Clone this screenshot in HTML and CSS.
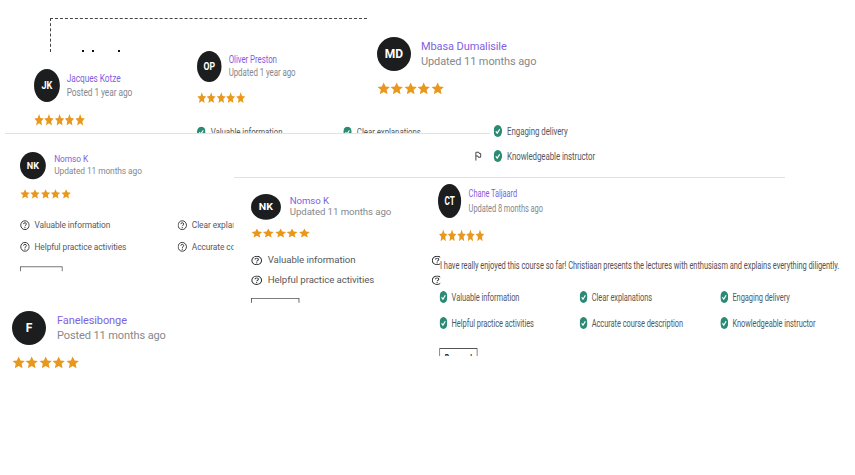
FILE: index.html
```html
<!DOCTYPE html>
<html lang="en">
<head>
<meta charset="utf-8">
<title>Course reviews</title>
<link rel="stylesheet" href="styles.css">
</head>
<body>
<svg class="defs" width="0" height="0" aria-hidden="true">
  <defs>
    <symbol id="star" viewBox="0 0 24 24"><path fill="#e8981c" d="M12 .8l3.4 7.4 8 .9-6 5.4 1.7 8L12 18.5l-7.1 4 1.7-8-6-5.4 8-.9z"/></symbol>
    <symbol id="ok" viewBox="0 0 24 24"><circle cx="12" cy="12" r="12" fill="#2a8a74"/><path fill="none" stroke="#fff" stroke-width="3" d="M6.5 12.5l4 4 7-8"/></symbol>
    <symbol id="help" viewBox="0 0 24 24"><circle cx="12" cy="12" r="10.2" fill="none" stroke="#2d2f31" stroke-width="2.2"/><path fill="none" stroke="#2d2f31" stroke-width="2.2" d="M8.6 9.5c0-4.4 6.9-4.4 6.9 0 0 2.7-3.5 2.4-3.5 5"/><circle cx="12" cy="17.6" r="1.4" fill="#2d2f31"/></symbol>
    <symbol id="flag" viewBox="0 0 24 24"><path fill="none" stroke="#2d2f31" stroke-width="2.4" d="M5 23V3h10l1 3h5v9h-8l-1-3H5"/></symbol>
  </defs>
</svg>

<main class="canvas">
  <div class="frame"></div>
  <div class="specks"><i></i><i></i><i></i></div>
  <hr class="rule rule-a">
  <hr class="rule rule-b">

  <section class="shot shot-jk">
    <header class="head"><div class="avatar">JK</div><div><a class="name">Jacques Kotze</a><p class="when">Posted 1 year ago</p></div></header>
    <div class="stars"><svg><use href="#star"/></svg><svg><use href="#star"/></svg><svg><use href="#star"/></svg><svg><use href="#star"/></svg><svg><use href="#star"/></svg></div>
  </section>

  <section class="shot shot-op">
    <header class="head"><div class="avatar">OP</div><div><a class="name">Oliver Preston</a><p class="when">Updated 1 year ago</p></div></header>
    <div class="stars"><svg><use href="#star"/></svg><svg><use href="#star"/></svg><svg><use href="#star"/></svg><svg><use href="#star"/></svg><svg><use href="#star"/></svg></div>
    <ul class="crit">
      <li><svg><use href="#ok"/></svg>Valuable information</li>
      <li><svg><use href="#ok"/></svg>Clear explanations</li>
    </ul>
  </section>

  <section class="shot shot-md">
    <header class="head"><div class="avatar">MD</div><div><a class="name">Mbasa Dumalisile</a><p class="when">Updated 11 months ago</p></div></header>
    <div class="stars"><svg><use href="#star"/></svg><svg><use href="#star"/></svg><svg><use href="#star"/></svg><svg><use href="#star"/></svg><svg><use href="#star"/></svg></div>
  </section>

  <section class="shot shot-frag">
    <span></span>
    <p class="item"><svg><use href="#ok"/></svg>Engaging delivery</p>
    <svg class="flag"><use href="#flag"/></svg>
    <p class="item"><svg><use href="#ok"/></svg>Knowledgeable instructor</p>
  </section>

  <section class="shot shot-nk1">
    <header class="head"><div class="avatar">NK</div><div><a class="name">Nomso K</a><p class="when">Updated 11 months ago</p></div></header>
    <div class="stars"><svg><use href="#star"/></svg><svg><use href="#star"/></svg><svg><use href="#star"/></svg><svg><use href="#star"/></svg><svg><use href="#star"/></svg></div>
    <ul class="crit">
      <li><svg><use href="#help"/></svg>Valuable information</li>
      <li><svg><use href="#help"/></svg>Clear explanations</li>
      <li><svg><use href="#help"/></svg>Helpful practice activities</li>
      <li><svg><use href="#help"/></svg>Accurate course description</li>
    </ul>
    <button class="btn" type="button">Personal</button>
  </section>

  <section class="shot shot-nk2">
    <header class="head"><div class="avatar">NK</div><div><a class="name">Nomso K</a><p class="when">Updated 11 months ago</p></div></header>
    <div class="stars"><svg><use href="#star"/></svg><svg><use href="#star"/></svg><svg><use href="#star"/></svg><svg><use href="#star"/></svg><svg><use href="#star"/></svg></div>
    <ul class="crit">
      <li><svg><use href="#help"/></svg>Valuable information</li>
      <li><svg><use href="#help"/></svg>Clear explanations</li>
      <li><svg><use href="#help"/></svg>Helpful practice activities</li>
      <li><svg><use href="#help"/></svg>Accurate course description</li>
    </ul>
    <button class="btn" type="button">Personal</button>
  </section>

  <section class="shot shot-ct">
    <header class="head"><div class="avatar">CT</div><div><a class="name">Chane Taljaard</a><p class="when">Updated 8 months ago</p></div></header>
    <div class="stars"><svg><use href="#star"/></svg><svg><use href="#star"/></svg><svg><use href="#star"/></svg><svg><use href="#star"/></svg><svg><use href="#star"/></svg></div>
    <p class="comment">I have really enjoyed this course so far! Christiaan presents the lectures with enthusiasm and explains everything diligently.</p>
    <ul class="crit">
      <li><svg><use href="#ok"/></svg>Valuable information</li>
      <li><svg><use href="#ok"/></svg>Clear explanations</li>
      <li><svg><use href="#ok"/></svg>Engaging delivery</li>
      <li><svg><use href="#ok"/></svg>Helpful practice activities</li>
      <li><svg><use href="#ok"/></svg>Accurate course description</li>
      <li><svg><use href="#ok"/></svg>Knowledgeable instructor</li>
    </ul>
    <button class="btn" type="button">Personal</button>
  </section>

  <section class="shot shot-f">
    <header class="head"><div class="avatar">F</div><div><a class="name">Fanelesibonge</a><p class="when">Posted 11 months ago</p></div></header>
    <div class="stars"><svg><use href="#star"/></svg><svg><use href="#star"/></svg><svg><use href="#star"/></svg><svg><use href="#star"/></svg><svg><use href="#star"/></svg></div>
  </section>
</main>
</body>
</html>
```

FILE: styles.css
```css
* { box-sizing: border-box; }
html, body { margin: 0; padding: 0; background: #fff; overflow: hidden; }
.defs { position: absolute; }
.canvas {
  position: relative;
  width: 855px;
  height: 475px;
  font-family: Roboto, "Noto Sans", sans-serif;
  letter-spacing: -.1px;
  overflow: hidden;
}

/* collage furniture */
.frame {
  position: absolute;
  left: 50px;
  top: 18px;
  width: 317px;
  height: 34px;
  border-top: 1px dashed #444;
  border-left: 1px dashed #444;
}
.specks { position: absolute; left: 82px; top: 50px; display: flex; gap: 8px; }
.specks i { width: 2px; height: 2px; background: #111; }
.specks i:last-child { margin-left: 16px; }
.rule { position: absolute; margin: 0; border: 0; height: 1px; background: #e0e2e4; z-index: 5; }
.rule-a { left: 5px; top: 133px; width: 485px; }
.rule-b { left: 234px; top: 177px; width: 551px; }

/* one pasted, resized review */
.shot {
  position: absolute;
  background: #fff;
  overflow: hidden;
  transform-origin: 0 0;
}
.head { display: flex; align-items: center; gap: 11px; height: 34px; padding-bottom: 1px; }
.avatar {
  flex: none;
  width: 34px;
  height: 34px;
  border-radius: 50%;
  background: #1c1d1f;
  color: #fff;
  font-size: 12px;
  font-weight: 700;
  letter-spacing: 0;
  display: flex;
  align-items: center;
  justify-content: center;
}
.name { display: block; font-size: 11px; line-height: 15px; color: #7f5fe0; white-space: nowrap; }
.when { margin: 0; font-size: 11px; line-height: 15px; color: #85888c; white-space: nowrap; }
.stars { display: flex; margin-top: 11px; height: 13px; }
.stars svg { width: 13.4px; height: 13px; }
.crit {
  list-style: none;
  margin: 14px 0 0;
  padding: 0;
  display: grid;
  font-size: 11px;
  color: #55595e;
}
.crit li, .item {
  display: flex;
  align-items: center;
  gap: 7px;
  white-space: nowrap;
  overflow: hidden;
  height: 14px;
}
.crit svg, .item svg { flex: none; width: 12px; height: 12px; }
.btn {
  display: block;
  padding: 2px 8px 0;
  height: 24px;
  background: #fff;
  border: 1px solid #555;
  font: 700 10px Roboto, sans-serif;
  color: #2d2f31;
  text-align: center;
}

.shot-jk { left: 34px; top: 69px; width: 140px; height: 60px; transform: scale(.76, .97); }
.shot-jk .head { gap: 9px; }
.shot-jk .stars { margin-top: 12px; }

.shot-op { left: 197px; top: 51px; width: 400px; height: 90px; transform: scale(.72, .91); }
.shot-op .head { gap: 10px; }
.shot-op .crit { grid-template-columns: 203px 1fr; margin-top: 24px; }

.shot-md { left: 377px; top: 37px; width: 170px; height: 62px; }
.shot-md .head { gap: 10px; }

.shot-frag {
  left: 474px;
  top: 124px;
  width: 180px;
  display: grid;
  grid-template-columns: 27px 1fr;
  row-gap: 11px;
  align-items: center;
  font-size: 11px;
  color: #55595e;
  background: transparent;
  transform: scale(.72, 1);
}
.shot-frag .flag { width: 11px; height: 10px; }
.item { margin: 0; }

.shot-nk1 { left: 20px; top: 152px; width: 281px; height: 149px; transform: scale(.76, .8); }
.shot-nk1 .crit { grid-template-columns: 207px 207px; row-gap: 13px; margin-top: 25px; }
.shot-nk1 .crit svg, .shot-nk2 .crit svg { width: 13px; height: 13px; }
.shot-nk1 .crit li { gap: 6px; }
.shot-nk1 .stars { margin-top: 12px; }
.shot-nk1 .btn { width: 56px; margin-top: 18px; }

.shot-nk2 { left: 251px; top: 194px; width: 215px; height: 143px; transform: scale(.88, .76); }
.shot-nk2 .head { gap: 10px; }
.shot-nk2 .crit { grid-template-columns: 205px 205px; row-gap: 12px; margin-top: 22px; }
.shot-nk2 .crit li { gap: 6px; }
.shot-nk2 .btn { width: 55px; margin-top: 17px; }

.shot-ct { left: 438px; top: 184px; width: 613px; height: 172px; background: transparent; transform: scale(.68, 1); }
.shot-ct .stars { margin: 11px 0 0 1px; }
.comment { margin: 17px 0 0 3px; font-size: 11px; line-height: 14px; letter-spacing: -.07px; color: #4f5357; white-space: nowrap; }
.shot-ct .crit { grid-template-columns: 206px 207px 1fr; row-gap: 12px; margin: 17px 0 0 2px; }
.shot-ct .crit li { gap: 6px; }
.shot-ct .btn { width: 56px; height: 20px; padding: 1px 0 0; margin: 18px 0 0 2px; }

.shot-f { left: 12px; top: 311px; width: 180px; height: 62px; }
```
